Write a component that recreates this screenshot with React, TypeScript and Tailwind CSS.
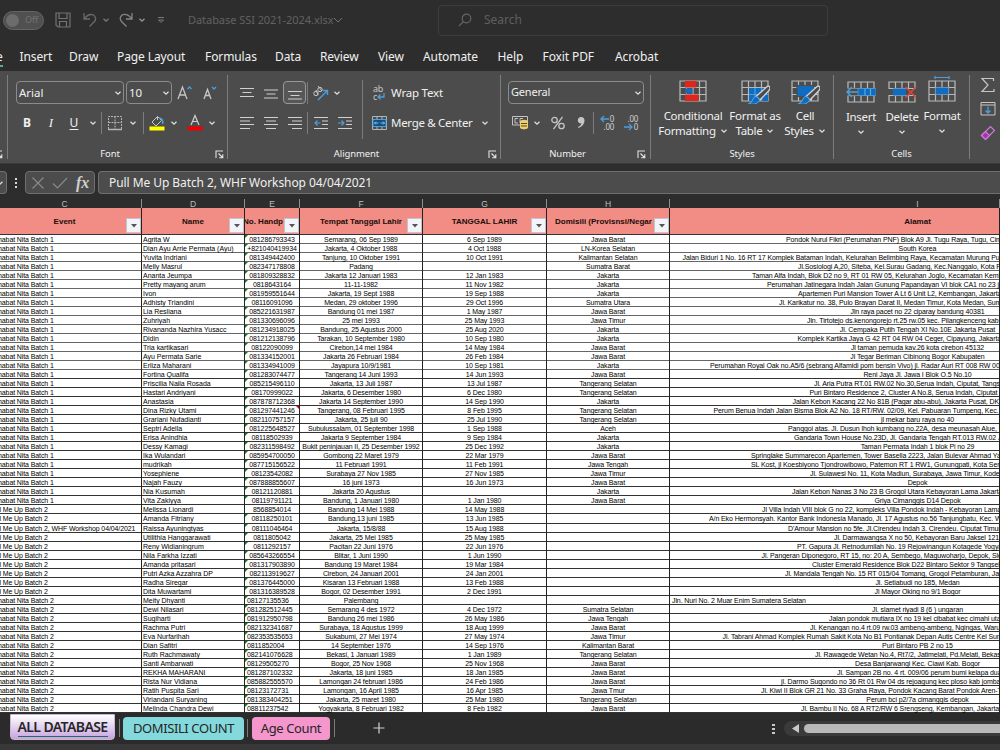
import type { ReactNode } from 'react';
import clsx from 'clsx';

// event, name, phone, birth place/date, date, domicile, address, address indent (0 = centred)
type Row = [string, string, string, string, string, string, string, number];

const S1 = 'habat Nita Batch 1';
const S2 = 'habat Nita Batch 2';
const P2 = 'll Me Up Batch 2';

const rows: Row[] = [
  [S1, 'Agrita W', '081286793343', 'Semarang, 06 Sep 1989', '6 Sep 1989', 'Jawa Barat', 'Pondok Nurul Fikri (Perumahan PNF) Blok A9 Jl. Tugu Raya, Tugu, Cimanggis', 116],
  [S1, 'Dian Ayu Arrie Permata (Ayu)', '+821040419934', 'Jakarta, 4 Oktober 1988', '4 Oct 1988', 'LN-Korea Selatan', 'South Korea', 0],
  [S1, 'Yuvita Indriani', '081349442400', 'Tanjung, 10 Oktober 1991', '10 Oct 1991', 'Kalimantan Selatan', 'Jalan Biduri 1 No. 16 RT 17 Komplek Bataman Indah, Kelurahan Belimbing Raya, Kecamatan Murung Pudak', 12.5],
  [S1, 'Melly Masrul', '082347178808', 'Padang', '', 'Sumatra Barat', 'Jl.Sosiologi A,20, Siteba, Kel.Surau Gadang, Kec.Nanggalo, Kota Padang', 128],
  [S1, 'Ananta Jeumpa', '081809328832', 'Jakarta 12 Januari 1983', '12 Jan 1983', 'Jakarta', 'Taman Alfa Indah, Blok D2 no 9, RT 01 RW 05, Kelurahan Joglo, Kecamatan Kembangan', 82],
  [S1, 'Pretty mayang arum', '0818643164', '11-11-1982', '11 Nov 1982', 'Jakarta', 'Perumahan Jatinegara Indah Jalan Gunung Papandayan VI blok CA1 no 23 jakarta', 97],
  [S1, 'Ivon', '081959551644', 'Jakarta, 19 Sept 1988', '19 Sep 1988', 'Jakarta', 'Apartemen Puri Mansion Tower A Lt 6 Unit L2, Kembangan, Jakarta', 128],
  [S1, 'Adhisty Triandini', '08116091096', 'Medan, 29 oktober 1996', '29 Oct 1996', 'Sumatra Utara', 'Jl. Karikatur no. 38, Pulo Brayan Darat II, Medan Timur, Kota Medan, Sumatera', 109],
  [S1, 'Lia Resliana', '085221631987', 'Bandung 01 mei 1987', '1 May 1987', 'Jawa Barat', 'Jln raya pacet no 22 ciparay bandung 40381', 0],
  [S1, 'Zuhriyah', '081330696096', '25 mei 1993', '25 May 1993', 'Jawa Timur', 'Jln. Tirtotejo ds.kenongorejo rt.25 rw.05 kec. Pilangkenceng kab', 137],
  [S1, 'Rivananda Nazhira Yusacc', '081234918025', 'Bandung, 25 Agustus 2000', '25 Aug 2020', 'Jakarta', 'Jl. Cempaka Putih Tengah XI No.10E Jakarta Pusat', 0],
  [S1, 'Didin', '081212138796', 'Tarakan, 10 September 1980', '10 Sep 1980', 'Jakarta', 'Komplek Kartika Jaya G 42 RT 04 RW 04 Ceger, Cipayung, Jakarta', 127.5],
  [S1, 'Tria kartikasari', '08122090099', 'Cirebon,14 mei 1984', '14 May 1984', 'Jawa Barat', 'Jl taman pemuda kav.26 kota cirebon 45132', 0],
  [S1, 'Ayu Permata Sarie', '081334152001', 'Jakarta 26 Februari 1984', '26 Feb 1984', 'Jawa Barat', 'Jl Tegar Beriman Cibinong Bogor Kabupaten', 0],
  [S1, 'Erliza Maharani', '081334941009', 'Jayapura 10/9/1981', '10 Sep 1981', 'Jakarta', 'Perumahan Royal Oak no.A5/6 (sebrang Alfamidi pom bensin Vivo) jl. Radar Auri RT 008 RW 009', 40],
  [S1, 'Fortina Qualifa', '081283074477', 'Tangerang 14 Juni 1993', '14 Jun 1993', 'Jawa Barat', 'Reni Jaya Jl. Jawa I Blok O.5 No.10', 0],
  [S1, 'Priscilia Naila Rosada', '085215496110', 'Jakarta, 13 Juli 1987', '13 Jul 1987', 'Tangerang Selatan', 'Jl. Aria Putra RT.01 RW.02 No.30,Serua Indah, Ciputat, Tangsel', 144],
  [S1, 'Hastari Andriyani', '08170999022', 'Jakarta, 6 Desember 1980', '6 Dec 1980', 'Tangerang Selatan', 'Puri Bintaro Residence 2, Cluster A No.8, Serua Indah, Ciputat', 139.5],
  [S1, 'Anastasia', '087878712368', 'Jakarta 14 September 1990', '14 Sep 1990', 'Jakarta', 'Jalan Kebon Kacang 22 No 81B (Pagar abu-abu), Jakarta Pusat, DKI', 122.5],
  [S1, 'Dina Rizky Utami', '081297441246', 'Tangerang, 08 Februari 1995', '8 Feb 1995', 'Tangerang Selatan', 'Perum Benua Indah Jalan Bisma Blok A2 No. 18 RT/RW. 02/09, Kel. Pabuaran Tumpeng, Kec. Karawaci', 43.5],
  [S1, 'Grariani Nufadianti', '082110757157', 'Jakarta, 25 juli 90', '25 Jul 1990', 'Tangerang Selatan', 'jl mekar baru raya no 40', 0],
  [S1, 'Septri Adella', '081225648527', 'Subulussalam, 01 September 1998', '1 Sep 1988', 'Aceh', 'Panggoi atas. Jl. Dusun lhoh kumbang no.22A, desa meunasah Alue, Kec', 118],
  [S1, 'Erisa Anindhia', '08118502939', 'Jakarta 9 September 1984', '9 Sep 1984', 'Jakarta', 'Gandaria Town House No.23D, Jl. Gandaria Tengah RT.013 RW.02 Jakarta', 124],
  [S1, 'Dessy Kamagi', '082311598492', 'Bukit peninjauan II, 25 Desember 1992', '25 Dec 1992', 'Jakarta', 'Taman Permata Indah 1 blok Pi no 29', 0],
  [S1, 'Ika Wulandari', '085954700050', 'Gombong 22 Maret 1979', '22 Mar 1979', 'Jawa Barat', 'Springlake Summarecon Apartemen, Tower Basella 2223, Jalan Bulevar Ahmad Yani', 81],
  [S1, 'mudrikah', '087715156522', '11 Februari 1991', '11 Feb 1991', 'Jawa Tengah', 'SL Kost, jl Koesbiyono Tjondrowibowo, Patemon RT 1 RW1, Gunungpati, Kota Semarang', 81],
  [S1, 'Yosephiene', '08123542082', 'Surabaya 27 Nov 1985', '27 Nov 1985', 'Jawa Timur', 'Jl. Sulawesi No. 11, Kota Madiun, Surabaya, Jawa Timur, Kode pos', 140],
  [S1, 'Najah Fauzy', '087888855607', '16 juni 1973', '16 Jun 1973', 'Jawa Barat', 'Depok', 0],
  [S1, 'Nia Kusumah', '08121120881', 'Jakarta 20 Agustus', '', 'Jakarta', 'Jalan Kebon Nanas 3 No 23 B Grogol Utara Kebayoran Lama Jakarta', 122],
  [S1, 'Vita Zakiyya', '08119791121', 'Bandung, 1 Januari 1980', '1 Jan 1980', 'Jawa Barat', 'Griya Cimanggis D14 Depok', 0],
  [P2, 'Melissa Lionardi', '8568854014', 'Bandung 14 Mei 1988', '14 May 1988', '', 'Jl Villa Indah VIII blok G no 22, kompleks Villa Pondok Indah - Kebayoran Lama', 92],
  [P2, 'Amanda Fitriany', '08118250101', 'Bandung,13 juni 1985', '13 Jun 1985', '', 'A/n Eko Hermonsyah. Kantor Bank Indonesia Manado, Jl. 17 Agustus no.56 Tanjungbatu, Kec. Wanea', 39],
  ['ll Me Up Batch 2, WHF Workshop 04/04/2021', 'Raissa Ayuningtyas', '08111046464', 'Jakarta, 15/8/88', '15 Aug 1988', '', "D'Amour Mansion no 5fe. Jl.Cirendeu Indah 3. Cirendeu. Ciputat Timur", 118],
  [P2, 'Utilithia Hanggarawati', '0811805042', 'Jakarta, 25 Mei 1985', '25 May 1985', '', 'Jl. Darmawangsa X no 50, Kebayoran Baru Jaksel 12150', 164],
  [P2, 'Reny Widianingrum', '0811292157', 'Pacitan 22 Juni 1976', '22 Jun 1976', '', 'PT. Gapura Jl.  Retnodumilah No. 19 Rejowinangun Kotagede Yogya', 127],
  [P2, 'Nila Farkha Izzati', '085643266554', 'Blitar, 1 Juni 1990', '1 Jun 1990', '', 'Jl. Pangeran Diponegoro, RT 15, no: 20 A, Sembego, Maguwoharjo, Depok, Sleman', 91.5],
  [P2, 'Amanda pritasari', '081317903890', 'Bandung 19 Maret 1984', '19 Mar 1984', '', 'Cluster Emerald Residence Blok D22 Bintaro Sektor 9 Tangsel', 142],
  [P2, 'Putri Azka Azzahra DP', '082113919627', 'Cirebon, 24 Januari 2001', '24 Jan 2001', '', 'Jl. Mandala Tengah No. 15 RT 015/04 Tomang, Grogol Petamburan, Jakarta', 115],
  [P2, 'Radha Siregar', '081376445000', 'Kisaran 13 Februari 1988', '13 Feb 1988', '', 'Jl. Setiabudi no 185, Medan', 0],
  [P2, 'Dita Muwartami', '081316389528', 'Bogor, 02 Desember 1991', '2 Dec 1991', '', 'Jl Mayor Oking no 9/1 Bogor', 0],
  [S2, 'Meity Dhyanti', '08127135536', 'Palembang', '', '', 'Jln. Nuri No. 2 Muar Enim Sumatera Selatan', 2],
  [S2, 'Dewi Nilasari', '081282512445', 'Semarang 4 des 1972', '4 Dec 1972', 'Sumatra Selatan', 'Jl. slamet riyadi 8 (6 ) ungaran', 0],
  [S2, 'Sugiharti', '081912950798', 'Bandung 26 mei 1986', '26 May 1986', 'Jawa Tengah', 'Jalan pondok mutiara IX no 19 kel cibabat kec cimahi utara', 159],
  [S2, 'Rachma Putri', '082132341687', 'Surabaya, 18 Agustus 1999', '18 Aug 1999', 'Jawa Barat', 'Jl. Kenangan no.4 rt.09 rw.03 ambeng-ambeng, Ngingas, Waru, Sda', 140],
  [S2, 'Eva Nurfarihah', '082353535653', 'Sukabumi, 27 Mei 1974', '27 May 1974', 'Jawa Timur', 'Jl. Tabrani Ahmad Komplek Rumah Sakit Kota No B1 Pontianak Depan Autis Centre Kel Sungai', 52.5],
  [S2, 'Dian Safitri', '0811852004', '14 September 1976', '14 Sep 1976', 'Kalimantan Barat', 'Puri Bintaro PB 2 no 15', 0],
  [S2, 'Ruth Rachmawaty', '082141076628', 'Bekasi, 1 Januari 1989', '1 Jan 1989', 'Tangerang Selatan', 'Jl. Rawagede Wetan No.4, Rt7/2, Jatimelati, Pd.Melati, Bekasi', 145],
  [S2, 'Santi Ambarwati', '08129505270', 'Bogor, 25 Nov 1968', '25 Nov 1968', 'Jawa Barat', 'Desa Banjarwangi Kec. Ciawi Kab. Bogor', 0],
  [S2, 'REKHA MAHARANI', '081287102332', 'Jakarta, 18 juni 1985', '18 Jan 1985', 'Jawa Barat', 'Jl. Sampan 2B no. 4 rt. 009/06 perum bumi kelapa dua', 167],
  [S2, 'Rista Nur Vidiana', '085882555570', 'Lamongan 24 februari 1986', '24 Feb 1986', 'Jawa Barat', 'jl. Darmo Sugondo no 36 Rt 01 Rw 04 ds rejoagung kec ploso kab jombang', 111],
  [S2, 'Ratih Puspita Sari', '08123172731', 'Lamongan, 16 April 1985', '16 Apr 1985', 'Jawa Tmur', 'Jl. Kiwi II Blok GR 21 No. 33 Graha Raya, Pondok Kacang Barat Pondok Aren-Tangsel', 91],
  [S2, 'Viriandani Suryaning', '081383404251', 'Jakarta, 25 maret 1980', '25 Mar 1980', 'Tangerang Selatan', 'Perum bci p2/7a cimanggis depok', 0],
  [S2, 'Melinda Chandra Dewi', '08811237542', 'Yogyakarta, 8 Februari 1982', '8 Feb 1982', 'Jawa Barat', 'Jl. Bambu II No. 68 A RT2/RW 6 Srengseng, Kembangan, Jakarta', 131],
];

const gridCols = 'grid grid-cols-[142px_103px_55px_123px_124px_123px_330px]';

function Chevron({ className }: { className?: string }) {
  return (
    <svg viewBox="0 0 8 8" className={clsx('h-2 w-2 shrink-0', className)} fill="none" stroke="#dedede" strokeWidth="1.3">
      <path d="M1.5 2.8 4 5.2 6.5 2.8" />
    </svg>
  );
}

function Sep({ className }: { className?: string }) {
  return <div className={clsx('w-px shrink-0 bg-[#7c7c7c]', className)} />;
}

function Lines({ d, className }: { d: string; className?: string }) {
  return (
    <svg viewBox="0 0 14 14" className={clsx('h-[14px] w-[14px] shrink-0', className)} stroke="#d0d0d0" strokeWidth="1.1" fill="none">
      <path d={d} />
    </svg>
  );
}

function Launcher() {
  return (
    <svg viewBox="0 0 9 9" className="mr-[4px] h-[9px] w-[9px] justify-self-end" fill="none" stroke="#e2e2e2" strokeWidth="1.1">
      <path d="M1 8V1H8M3.5 3.5 7.5 7.5M7.8 4.3V7.8H4.2" />
    </svg>
  );
}

function GroupLabel({ children, launcher }: { children: string; launcher?: boolean }) {
  return (
    <div
      className={clsx(
        'mt-auto grid h-[17px] items-center text-center text-[9.5px] tracking-[-0.1px]',
        launcher ? 'grid-cols-[0px_1fr_16px]' : 'grid-cols-[16px_1fr_16px]',
      )}
    >
      <span />
      <span>{children}</span>
      {launcher && <Launcher />}
    </div>
  );
}

function SheetIcon({ children }: { children?: ReactNode }) {
  return (
    <svg viewBox="0 0 30 28" className="h-7 w-[30px]" fill="none" stroke="#b9b9b9" strokeWidth="1.2">
      <path d="M2 5H28V25H2ZM2 11.5H28M2 18.5H28M8.5 5V25M15 5V25M21.5 5V25" />
      {children}
    </svg>
  );
}

function Brush() {
  return (
    <>
      <path d="M29.5 10.5Q31 12.500 28.500 15L20 24 16 20.500 26 11.500Q28.500 9.500 29.500 10.500Z" fill="#4c4c4c" stroke="#d6d6d6" strokeWidth="1.300" />
      <path d="M15.500 20.500Q19.500 21 19.500 24.500Q16 30 8.500 27.500Q12 27 12.500 24Q13.500 21 15.500 20.500Z" fill="#0f6cc0" stroke="#59a8e2" strokeWidth="1" />
    </>
  );
}

function BigButton({ icon, top, bottom, className }: { icon: ReactNode; top: string; bottom?: string; className?: string }) {
  return (
    <div className={clsx('flex flex-col items-center whitespace-nowrap text-[11.5px] leading-[15px] tracking-[-0.3px]', className)}>
      {icon}
      <span className="mt-[4px]">{top}</span>
      <span className="flex h-[15px] items-center gap-1">
        {bottom}
        <Chevron />
      </span>
    </div>
  );
}

function TitleBar() {
  return (
    <header className="flex h-10 items-center text-[#626262]">
      <div className="ml-[3px] flex h-[19px] w-[41px] items-center rounded-full border border-[#646464] bg-[#505050] pl-[2px] text-[9px]">
        <span className="mr-[6px] h-[13px] w-[13px] rounded-full bg-[#6c6c6c]" />
        <span className="text-[#737373]">Off</span>
      </div>
      <svg viewBox="0 0 16 16" className="ml-[11px] h-4 w-4" fill="none" stroke="#737373" strokeWidth="1.2">
        <path d="M1 1H15V15H3L1 13ZM4 1V6.500H12V1M4.500 15V9.500H11.500V15" />
      </svg>
      <svg viewBox="0 0 16 16" className="ml-[11px] h-4 w-4" fill="none" stroke="#6a6a6a" strokeWidth="1.3">
        <path d="M2 1V7H8M2.300 6.500Q7 1 11.500 3Q15.500 6.500 12 10L7.500 14.500" />
      </svg>
      <Chevron className="ml-1 opacity-45" />
      <svg viewBox="0 0 16 16" className="ml-[8px] h-4 w-4" fill="none" stroke="#858585" strokeWidth="1.3">
        <path d="M14 1V7H8M13.700 6.500Q9 1 4 3Q.500 6.500 4 10L8.500 14.500" />
      </svg>
      <Chevron className="ml-1 opacity-60" />
      <svg viewBox="0 0 8 8" className="ml-[11px] h-2 w-2" fill="none" stroke="#7a7a7a">
        <path d="M1 1.500H7M1.500 4 4 6.500 6.500 4Z" />
      </svg>
      <span className="ml-[23px] w-[142px] whitespace-nowrap text-[11px] tracking-[-0.05px]">Database SSI 2021-2024.xlsx</span>
      <svg viewBox="0 0 10 8" className="ml-[3px] h-2 w-[10px]" fill="none" stroke="#747474">
        <path d="M1 2 5 6 9 2" />
      </svg>
      <div className="ml-[95px] flex h-[31px] w-[390px] items-center rounded-[4px] border border-[#3d3d3d] pl-[19px] text-[12px] text-[#5f5f5f]">
        <svg viewBox="0 0 14 14" className="mr-3 h-[14px] w-[14px]" fill="none" stroke="#646464" strokeWidth="1.2">
          <circle cx="8.500" cy="5.500" r="4.300" />
          <path d="M5.500 8.500 1 13" />
        </svg>
        Search
      </div>
    </header>
  );
}

function RibbonTabs() {
  return (
    <nav className="flex h-[31px] items-center overflow-hidden whitespace-nowrap pt-[3px] text-[12px] tracking-[-0.1px] text-[#f0f0f0] [&>span]:shrink-0">
      <span className="relative -ml-1 w-[23.500px]">
        e<i className="absolute -bottom-px left-0 h-[2px] w-[7px] bg-[#54b083]" />
      </span>
      <span className="w-[49.500px]">Insert</span>
      <span className="w-[48px]">Draw</span>
      <span className="w-[88px]">Page Layout</span>
      <span className="w-[70px]">Formulas</span>
      <span className="w-[45px]">Data</span>
      <span className="w-[58px]">Review</span>
      <span className="w-[45px]">View</span>
      <span className="w-[74.500px]">Automate</span>
      <span className="w-[45px]">Help</span>
      <span className="w-[72.500px]">Foxit PDF</span>
      <span>Acrobat</span>
    </nav>
  );
}

function FontGroup() {
  return (
    <section className="flex w-[220px] shrink-0 flex-col">
      <div className="flex h-[23px] items-center">
        <div className="ml-[8px] flex h-[23px] w-[108px] items-center justify-between rounded-[4px] border border-[#8b8b8b] pl-[2px] pr-[1px] text-[11.5px]">
          Arial
          <Chevron />
        </div>
        <div className="ml-[2px] flex h-[23px] w-[46px] items-center justify-between rounded-[4px] border border-[#8b8b8b] pl-[2px] pr-[1px] text-[11.5px]">
          10
          <Chevron />
        </div>
        <svg viewBox="0 0 16 16" className="ml-[5px] h-4 w-4" fill="none" stroke="#c6c6c6" strokeWidth="1.3">
          <path d="M1 14 5.500 2 10 14M2.500 10H8.500" />
          <path d="M10.500 4 12.500 2 14.500 4" stroke="#4aa0de" />
        </svg>
        <svg viewBox="0 0 16 16" className="ml-[10px] h-4 w-4" fill="none" stroke="#c6c6c6" strokeWidth="1.3">
          <path d="M1 14 4.500 4.500 8 14M2.500 10.500H7" />
          <path d="M9 2 11 4 13 2" stroke="#4aa0de" />
        </svg>
      </div>
      <div className="mt-[7px] flex h-[23px] items-center">
        <b className="ml-[13px] w-3 text-center text-[12px]">B</b>
        <i className="ml-3 w-3 text-center font-['Liberation_Serif'] text-[13px]">I</i>
        <u className="ml-[11px] w-3 text-center text-[12px] underline-offset-2">U</u>
        <Chevron className="ml-[9px]" />
        <Sep className="ml-1 h-[22px]" />
        <svg viewBox="0 0 16 16" className="ml-[5px] h-4 w-4" fill="none" stroke="#b5b5b5">
          <path d="M1.500 14V1.500H14.500V14M8 1.500V14M1.500 7.500H14.500" strokeDasharray="2 1" />
          <path d="M1 14.500H15" strokeWidth="1.500" />
        </svg>
        <Chevron className="ml-[6px]" />
        <Sep className="ml-[6px] h-[22px]" />
        <svg viewBox="0 0 16 17" className="ml-[5px] h-[17px] w-4" fill="none" stroke="#c6c6c6">
          <path d="M3 8 8.500 2.500 12.500 6.500 7 12ZM8.500 2.500V6" />
          <path d="M10 4Q15 5 13.500 10" stroke="#4aa0de" strokeWidth="1.500" />
          <path d="M.500 14.500H15.500" stroke="#ffff00" strokeWidth="4" />
        </svg>
        <Chevron className="ml-[5px]" />
        <svg viewBox="0 0 16 17" className="ml-[9px] h-[17px] w-4" fill="none" stroke="#d0d0d0" strokeWidth="1.2">
          <path d="M4 11 8 1.500 12 11M5.500 7.500H10.500" />
          <path d="M.500 14.500H15.500" stroke="#f00000" strokeWidth="4" />
        </svg>
        <Chevron className="ml-[5px]" />
      </div>
      <GroupLabel launcher>Font</GroupLabel>
    </section>
  );
}

function AlignmentGroup() {
  return (
    <section className="flex w-[273px] shrink-0 flex-col">
      <div className="flex">
        <div className="flex w-[134px] flex-col">
          <div className="flex h-[23px] items-center">
            <Lines className="ml-[12px]" d="M0 2.500H14M2.500 6.500H11.500M0 10.500H14" />
            <Lines className="ml-[10px]" d="M0 4H14M2.500 8H11.500M0 12H14" />
            <div className="ml-[5px] flex h-[23px] w-[23px] items-center justify-center rounded-[4px] border border-[#999] bg-[#575757]">
              <Lines d="M0 5.500H14M2.500 9.500H11.500M0 13H14" />
            </div>
            <Sep className="ml-px h-[22px]" />
            <svg viewBox="0 0 17 16" className="ml-1 h-4 w-[17px]" fill="none" stroke="#c6c6c6">
              <circle cx="4" cy="8.500" r="2.200" />
              <circle cx="8" cy="4.500" r="2.200" />
              <path d="M4 5 6 10M6 1 10 6" />
              <path d="M6 15 15 6M11 5.500H15.500V10" stroke="#4aa0de" strokeWidth="1.400" />
            </svg>
            <Chevron className="ml-[4px]" />
          </div>
          <div className="mt-[7px] flex h-[23px] items-center">
            <Lines className="ml-[12px]" d="M0 1.500H14M0 5H10M0 8.500H14M0 12.500H10" />
            <Lines className="ml-[10px]" d="M0 1.500H14M2 5H12M0 8.500H14M2 12.500H12" />
            <Lines className="ml-[10px]" d="M0 1.500H14M4 5H14M0 8.500H14M4 12.500H14" />
            <Sep className="ml-[5px] h-[22px]" />
            <svg viewBox="0 0 15 14" className="ml-[6px] h-[14px] w-[15px]" fill="none" stroke="#d0d0d0" strokeWidth="1.100">
              <path d="M0 1.500H14M8 5H14M8 8.500H14M0 12.500H14" />
              <path d="M6.500 7H1M3.500 4.500 1 7 3.500 9.500" stroke="#4aa0de" />
            </svg>
            <svg viewBox="0 0 15 14" className="ml-[9px] h-[14px] w-[15px]" fill="none" stroke="#d0d0d0" strokeWidth="1.100">
              <path d="M0 1.500H14M8 5H14M8 8.500H14M0 12.500H14" />
              <path d="M0 7H5.500M3.500 4.500 6 7 3.500 9.500" stroke="#4aa0de" />
            </svg>
          </div>
        </div>
        <Sep className="-mt-px h-[59px]" />
        <div className="flex flex-col whitespace-nowrap text-[11.5px] tracking-[-0.3px]">
          <div className="flex h-[23px] items-center">
            <span className="ml-[10px] flex h-4 w-[14px] flex-col text-[9px] leading-[8px] text-[#c6c6c6]">
              ab
              <span className="flex">
                c
                <svg viewBox="0 0 8 8" className="h-2 w-2" fill="none" stroke="#4aa0de" strokeWidth="1.300">
                  <path d="M7 0V4H1M3.500 1.500 1 4 3.500 6.500" />
                </svg>
              </span>
            </span>
            <span className="ml-1 tracking-[-0.2px]">Wrap Text</span>
          </div>
          <div className="mt-[7px] flex h-[23px] items-center">
            <svg viewBox="0 0 15 14" className="ml-[9px] h-[14px] w-[15px]" fill="none" stroke="#b5b5b5">
              <path d="M.500 .500H14.500V13.500H.500ZM5 .500V13.500M10 .500V13.500" />
              <path d="M1 3.500H14V10.500H1Z" fill="#124f80" stroke="#4aa0de" />
              <path d="M2.500 7H6.500M8.500 7H12.500M4 5.500 2.500 7 4 8.500M11 5.500 12.500 7 11 8.500" stroke="#7cc0ee" />
            </svg>
            <span className="ml-[4px] w-[81px]">Merge &amp; Center</span>
            <Chevron className="ml-[9px]" />
          </div>
        </div>
      </div>
      <GroupLabel launcher>Alignment</GroupLabel>
    </section>
  );
}

function NumberGroup() {
  return (
    <section className="flex w-[149px] shrink-0 flex-col">
      <div className="ml-[7px] flex h-[23px] w-[136px] items-center justify-between rounded-[4px] border border-[#8b8b8b] pl-[2px] pr-[1px] text-[11px] tracking-[-0.2px]">
        General
        <Chevron />
      </div>
      <div className="mt-[7px] flex h-[23px] items-center">
        <svg viewBox="0 0 16 15" className="ml-[11px] h-[15px] w-4" fill="none" stroke="#c2c2c2">
          <path d="M.500 1.500H15.500V10H.500ZM6 3.500H3V8H6M11 3.500H8V8H10" />
          <path d="M8.500 6Q12 4.500 15.500 6V13Q12 15 8.500 13Z" fill="#f0cf73" stroke="#f0cf73" />
          <path d="M9 8.500H15M9 11H15" stroke="#5b4b22" />
        </svg>
        <Chevron className="ml-[5px]" />
        <svg viewBox="0 0 14 14" className="ml-[10px] h-[14px] w-[14px]" fill="none" stroke="#c6c6c6" strokeWidth="1.300">
          <circle cx="3.500" cy="4" r="2.700" />
          <circle cx="10.500" cy="10" r="2.700" />
          <path d="M11.500 .800 2.500 13.200" />
        </svg>
        <svg viewBox="0 0 8 13" className="ml-3 h-[13px] w-2" fill="#c6c6c6">
          <path d="M4 1Q7.500 1 7.500 5Q7 10 1.500 12L1 11Q4 9.500 4.500 7.500Q1 7.500 .800 4.500Q1 1 4 1Z" />
        </svg>
        <Sep className="ml-[8px] h-[22px]" />
        <span className="ml-[4px] flex w-[16px] flex-col items-end text-[8px] leading-[8px] tracking-[-0.3px] text-[#d0d0d0]">
          <span className="flex h-2 items-center">
            <svg viewBox="0 0 9 8" className="mr-px h-2 w-[9px]" fill="none" stroke="#4aa0de" strokeWidth="1.300">
              <path d="M9 4H1M4 1 1 4 4 7" />
            </svg>
            0
          </span>
          <span className="h-2">.00</span>
        </span>
        <span className="ml-[8px] flex w-[16px] flex-col items-end text-[8px] leading-[8px] tracking-[-0.3px] text-[#d0d0d0]">
          <span className="h-2">.00</span>
          <span className="flex h-2 items-center">
            <svg viewBox="0 0 9 8" className="mr-px h-2 w-[9px]" fill="none" stroke="#4aa0de" strokeWidth="1.300">
              <path d="M0 4H8M5 1 8 4 5 7" />
            </svg>
            0
          </span>
        </span>
      </div>
      <GroupLabel launcher>Number</GroupLabel>
    </section>
  );
}

function StylesGroup() {
  return (
    <section className="-mt-[5px] flex w-[182px] shrink-0 flex-col">
      <div className="flex">
        <BigButton
          className="ml-[9px] w-[66px]"
          top="Conditional"
          bottom="Formatting"
          icon={
            <SheetIcon>
              <path d="M7 5H18.500V11.500H7ZM7 18.500H20.500V25H7Z" fill="#e0261c" stroke="none" />
              <path d="M7.500 12.500H14.500V17.500H7.500Z" fill="#0f6cc0" stroke="none" />
            </SheetIcon>
          }
        />
        <BigButton
          className="ml-[2px] w-[54px]"
          top="Format as"
          bottom="Table"
          icon={
            <SheetIcon>
              <path d="M9 12H28V25H9Z" fill="#0f6cc0" stroke="none" />
              <path d="M15 12V25M21.500 12V25M9 18.500H28" stroke="#4aa0de" />
              <Brush />
            </SheetIcon>
          }
        />
        <BigButton
          className="ml-[2px] w-[42px]"
          top="Cell"
          bottom="Styles"
          icon={
            <SheetIcon>
              <path d="M7 9.500H23.500V20.500H7Z" fill="#0f6cc0" stroke="#4c4c4c" />
              <Brush />
            </SheetIcon>
          }
        />
      </div>
      <GroupLabel>Styles</GroupLabel>
    </section>
  );
}

function CellsGroup() {
  return (
    <section className="-mt-[5px] flex w-[135px] shrink-0 flex-col">
      <div className="flex">
        <BigButton
          className="ml-[6px] w-[42px] pt-px"
          top="Insert"
          icon={
            <SheetIcon>
              <path d="M0 11.500H30V18.500H0Z" fill="#4c4c4c" stroke="none" />
              <path d="M12 11.500H30V18.500H12Z" fill="#0f6cc0" stroke="#59a8e2" strokeWidth=".6" />
              <path d="M19 11.500V18.500M24.500 11.500V18.500" stroke="#59a8e2" />
              <path d="M12 15H1M6 10 1 15 6 20" stroke="#4aa0de" strokeWidth="1.500" />
            </SheetIcon>
          }
        />
        <BigButton
          className="-ml-px w-[42px] pt-px"
          top="Delete"
          icon={
            <SheetIcon>
              <path d="M1 12H30V18H1Z" fill="#4c4c4c" stroke="none" />
              <path d="M6 11.500H19V18.500H6Z" fill="#0f6cc0" stroke="none" />
              <path d="M18.500 10 29 20.500M29 10 18.500 20.500" stroke="#e0443a" strokeWidth="1.600" />
            </SheetIcon>
          }
        />
        <BigButton
          className="-ml-[2px] w-[42px]"
          top="Format"
          icon={
            <SheetIcon>
              <path d="M8.500 11.500H21.500V18.500H8.500Z" fill="#0f6cc0" stroke="none" />
              <path d="M8 1.500H22M8 0V3M22 0V3" stroke="#4aa0de" />
            </SheetIcon>
          }
        />
      </div>
      <GroupLabel>Cells</GroupLabel>
    </section>
  );
}

function Ribbon() {
  return (
    <div className="flex h-[93px] overflow-hidden border-b border-[#3a3a3a] bg-[#4c4c4c] pt-[10px] text-[#f0f0f0]">
      <div className="flex w-[7px] shrink-0 flex-col justify-end pb-1">
        <div className="-ml-1">
          <Launcher />
        </div>
      </div>
      <Sep className="-mt-[6px] h-[84px]" />
      <FontGroup />
      <Sep className="-ml-px -mt-[6px] h-[84px]" />
      <AlignmentGroup />
      <Sep className="-ml-px -mt-[6px] h-[84px]" />
      <NumberGroup />
      <Sep className="-mt-[6px] h-[84px]" />
      <StylesGroup />
      <Sep className="-mt-[6px] h-[84px]" />
      <CellsGroup />
      <Sep className="-mt-[6px] h-[84px]" />
      <div className="-mt-[4px] ml-[10px] flex w-[17px] shrink-0 flex-col gap-[8px]">
        <svg viewBox="0 0 16 16" className="h-4 w-4" fill="none" stroke="#c6c6c6" strokeWidth="1.200">
          <path d="M13.500 4V1.500H2L8 8 2 14.500H14V12" />
        </svg>
        <svg viewBox="0 0 16 16" className="h-4 w-4" fill="none" stroke="#c6c6c6">
          <path d="M1 1.500H15V14H1ZM1 4H15" />
          <path d="M8 5.500V12M5.500 9.500 8 12 10.500 9.500" stroke="#4aa0de" strokeWidth="1.300" />
        </svg>
        <svg viewBox="0 0 16 16" className="h-4 w-4" fill="none" stroke="#cf7bd9" strokeWidth="1.200">
          <path d="M1.500 10.500 10.500 1.500 14.500 5.500 5.500 14.500Z" />
          <path d="M1.500 10.500 5.500 6.500 9.500 10.500 5.500 14.500Z" fill="#a830b5" />
        </svg>
      </div>
    </div>
  );
}

function FormulaBar() {
  return (
    <div className="flex h-[31px] items-center pt-[6px] text-[#f0f0f0]">
      <div className="flex h-[23px] w-[7px] items-center rounded-r-[4px] border border-l-0 border-[#6f6f6f] bg-[#4c4c4c]">
        <Chevron className="-ml-1" />
      </div>
      <div className="ml-2 flex flex-col gap-[2px]">
        <i className="h-[2px] w-[2px] bg-[#d8d8d8]" />
        <i className="h-[2px] w-[2px] bg-[#d8d8d8]" />
        <i className="h-[2px] w-[2px] bg-[#d8d8d8]" />
      </div>
      <div className="ml-[8px] flex h-[23px] w-[70px] shrink-0 items-center rounded-[4px] border border-[#6f6f6f] bg-[#4c4c4c] pl-[5px]">
        <svg viewBox="0 0 14 14" className="h-[14px] w-[14px]" stroke="#8b8b8b" strokeWidth="1.100">
          <path d="M1.500 1.500 12.500 12.500M12.500 1.500 1.500 12.500" />
        </svg>
        <svg viewBox="0 0 16 14" className="ml-[7px] h-[14px] w-4" fill="none" stroke="#8b8b8b" strokeWidth="1.100">
          <path d="M1 7.500 5.500 12 15 2" />
        </svg>
        <i className="ml-2 font-['Liberation_Serif'] text-[16px] font-bold leading-none text-[#d0d0d0]">fx</i>
      </div>
      <div className="ml-[3px] flex h-[23px] flex-1 items-center whitespace-nowrap rounded-l-[4px] border border-r-0 border-[#6f6f6f] bg-[#4c4c4c] pl-[10px] text-[12px] tracking-[-0.07px]">
        Pull Me Up Batch 2, WHF Workshop 04/04/2021
      </div>
    </div>
  );
}

function FilterButton() {
  return (
    <span className="absolute bottom-[2px] right-0 flex h-[15px] w-[15px] items-center justify-center border border-[#c4c4cc] bg-[#f2f4f9]">
      <svg viewBox="0 0 6 4" className="h-1 w-[6px]" fill="#555">
        <path d="M0 0H6L3 3.500Z" />
      </svg>
    </span>
  );
}

function Cell({ children, className }: { children?: ReactNode; className?: string }) {
  return <div className={clsx('relative overflow-x-clip whitespace-nowrap border-r border-[#222]', className)}>{children}</div>;
}

function Sheet() {
  return (
    <main className="h-[518px] overflow-hidden font-['Liberation_Sans',sans-serif]">
      <div className={clsx(gridCols, 'h-[13px] pt-[4px] text-center text-[8.500px] leading-[10px] text-[#bdbdbd] [&>span]:border-r [&>span]:border-[#8f8f8f]')}>
        <span className="pr-3">C</span>
        <span>D</span>
        <span>E</span>
        <span>F</span>
        <span>G</span>
        <span>H</span>
        <span className="pl-[166px]">I</span>
      </div>
      <div className={clsx(gridCols, 'h-[27px] border-b border-[#333] bg-[#f28d85] text-center text-[8px] font-bold leading-[27px] text-[#1c0c0a]')}>
        <Cell className="pr-3">Event<FilterButton /></Cell>
        <Cell>Name<FilterButton /></Cell>
        <Cell className="text-left"><span className="-ml-[2px]">No. Handp</span><FilterButton /></Cell>
        <Cell>Tempat Tanggal Lahir<FilterButton /></Cell>
        <Cell>TANGGAL LAHIR<FilterButton /></Cell>
        <Cell className="pl-[8px] text-left">Domisili (Provisnsi/Negar<FilterButton /></Cell>
        <Cell className="pl-[166px]">Alamat</Cell>
      </div>
      <div className="flex h-[478px] flex-col bg-white text-center text-[7px] leading-[9px] tracking-[-0.1px] text-black">
        {rows.map(([event, name, phone, birth, date, home, address, indent], i) => (
          <div key={i} className={clsx(gridCols, 'min-h-0 flex-1 border-b', i < 15 ? 'border-[#666]' : 'border-[#333]')}>
            <Cell className="text-left">
              <span className="-ml-[2px]">{event}</span>
            </Cell>
            <Cell className="pl-px text-left tracking-[-0.02px]">{name}</Cell>
            <Cell className={i >= 40 ? 'pl-[2px] text-left' : ''}>
              {i !== 30 && <i className="absolute left-0 top-0 border-r-[3px] border-t-[3px] border-r-transparent border-t-[#0b7a2a]" />}
              {i === 19 && <i className="absolute right-0 top-0 border-l-[3px] border-t-[3px] border-l-transparent border-t-[#e00000]" />}
              {phone}
            </Cell>
            <Cell>{birth}</Cell>
            <Cell>{date}</Cell>
            <Cell>{home}</Cell>
            <Cell className={indent ? 'text-left' : ''}>
              <span style={{ paddingLeft: indent || 166 }}>{address}</span>
            </Cell>
          </div>
        ))}
      </div>
    </main>
  );
}

function SheetTabs() {
  return (
    <footer className="h-[37px] shrink-0 bg-[#383838]">
      <div className="flex h-[31px] items-start whitespace-nowrap bg-[#2b2b2b] text-[13px] tracking-[-0.4px] text-[#262626]">
        <div className="ml-[10px] mt-px flex h-[26px] w-[105px] flex-col items-center rounded-b-[4px] border border-[#cdb6da] bg-linear-to-b from-white to-[#c6a4de] text-[14px] font-semibold leading-[24px] tracking-[-0.6px]">
          ALL DATABASE
          <div className="-mt-[3px] h-px w-[90px] shrink-0 bg-[#256a5a]" />
        </div>
        <Sep className="ml-1 mt-[6px] h-[18px]" />
        <div className="ml-[3px] mt-[4px] flex h-[23px] w-[121px] items-center justify-center rounded-[4px] bg-[#84d9dd]">DOMISILI COUNT</div>
        <Sep className="ml-[3px] mt-[6px] h-[18px]" />
        <div className="ml-1 mt-[4px] flex h-[23px] w-[78px] items-center justify-center rounded-[4px] bg-[#f596cd]">Age Count</div>
        <Sep className="ml-[4px] mt-[6px] h-[18px]" />
        <svg viewBox="0 0 12 12" className="ml-[38px] mt-[9px] h-3 w-3" stroke="#d0d0d0" strokeWidth="1.200">
          <path d="M6 .500V11.500M.500 6H11.500" />
        </svg>
        <div className="ml-[387px] mt-[11px] flex flex-col gap-[2px]">
          <i className="h-[2px] w-[3px] bg-[#c8c8c8]" />
          <i className="h-[2px] w-[3px] bg-[#c8c8c8]" />
          <i className="h-[2px] w-[3px] bg-[#c8c8c8]" />
        </div>
        <div className="ml-[9px] mt-[8px] flex h-[15px] flex-1 items-center rounded-l-full bg-[#3a3a3a] pl-[8px]">
          <svg viewBox="0 0 7 9" className="h-[9px] w-[7px]" fill="#c8c8c8">
            <path d="M7 0V9L0 4.500Z" />
          </svg>
          <div className="ml-[5px] h-[9px] flex-1 rounded-l-full bg-[#b9b9b9]" />
        </div>
      </div>
    </footer>
  );
}

export default function App() {
  return (
    <div className="flex h-[750px] w-[1000px] flex-col overflow-hidden bg-[#2d2d2d] font-['Noto_Sans',sans-serif]">
      <TitleBar />
      <RibbonTabs />
      <Ribbon />
      <FormulaBar />
      <Sheet />
      <SheetTabs />
    </div>
  );
}
